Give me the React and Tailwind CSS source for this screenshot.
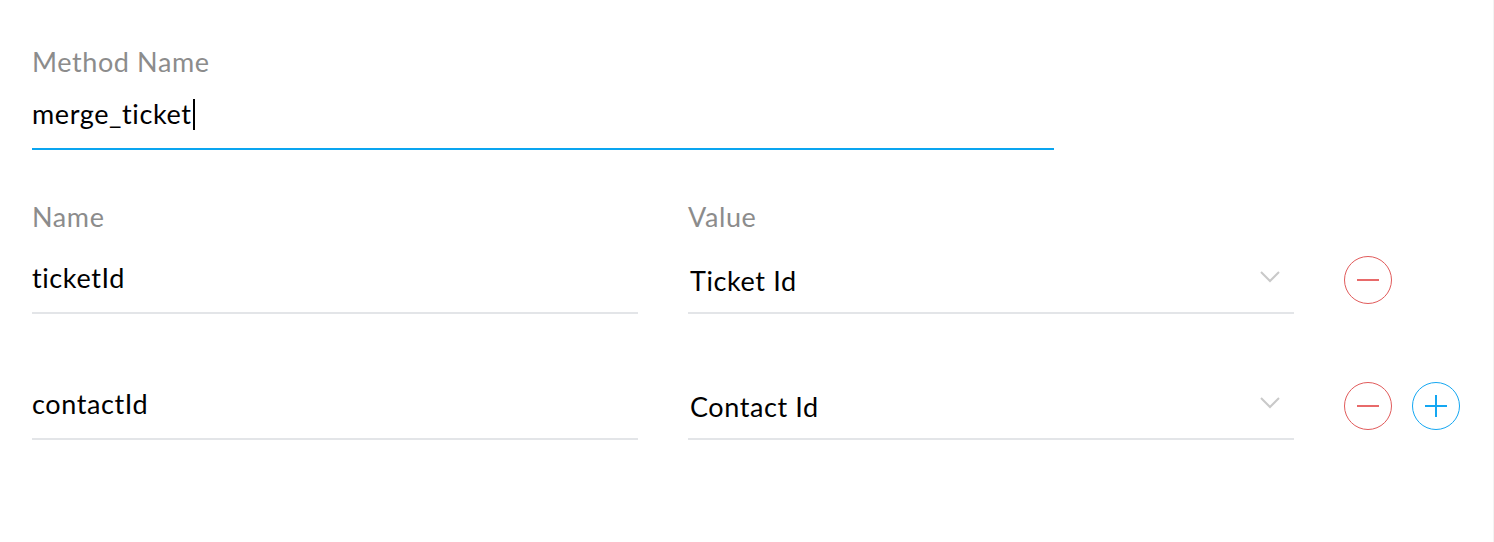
import React from 'react'

const MinusBtn = () => (
  <button className="w-12 h-12 rounded-full border-[1.75px] border-[#e15b5b] flex items-center justify-center">
    <span className="block w-[22px] h-[2px] bg-[#e86a6a]" />
  </button>
)

const PlusBtn = () => (
  <button className="w-12 h-12 rounded-full border-[1.75px] border-[#14a7f2] flex items-center justify-center">
    <svg width="24" height="24" viewBox="0 0 24 24" fill="none" stroke="#14a7f2" strokeWidth="2">
      <path d="M12 1v22M1 12h22" />
    </svg>
  </button>
)

const Chevron = () => (
  <svg width="20" height="12" viewBox="0 0 20 12" fill="none" stroke="#c9c9c9" strokeWidth="2">
    <path d="M1 1l9 9 9-9" />
  </svg>
)

const rows = [
  { name: 'ticketId', value: 'Ticket Id', add: false },
  { name: 'contactId', value: 'Contact Id', add: true },
]

export default function App() {
  return (
    <div className="w-[1494px] h-[542px] bg-white border-r border-[#f3f3f3] font-['Lato',sans-serif] text-[27px] leading-[32px] tracking-[0.6px] px-8 pt-[46px]">
      <div className="w-[1022px]">
        <div className="text-[#8c8c8c]">Method Name</div>
        <div className="mt-[20px] h-[32px] flex items-center text-black">
          merge_ticket
          <span className="ml-[1px] inline-block w-[2px] h-[31px] bg-black" />
        </div>
        <div className="mt-[18px] h-[2px] bg-[#0aa5f0]" />
      </div>

      <div className="mt-[51px] grid grid-cols-[606px_606px] gap-x-[50px] text-[#8c8c8c]">
        <div>Name</div>
        <div>Value</div>
      </div>

      {rows.map((r, i) => (
        <div key={r.name} className={`h-[81px] flex items-end ${i === 0 ? '' : 'mt-[45px]'}`}>
          <div className="w-[606px] pb-[18px] border-b-2 border-[#e3e5e8] text-black">
            {r.name}
          </div>
          <div className="ml-[50px] w-[606px] flex items-end justify-between pl-[2px] pr-[14px] border-b-2 border-[#e3e5e8] text-black">
            <span className="pb-[15px]">{r.value}</span>
            <span className="pb-[29px]"><Chevron /></span>
          </div>
          <div className="ml-[50px] mb-[10px] flex gap-5">
            <MinusBtn />
            {r.add && <PlusBtn />}
          </div>
        </div>
      ))}
    </div>
  )
}
